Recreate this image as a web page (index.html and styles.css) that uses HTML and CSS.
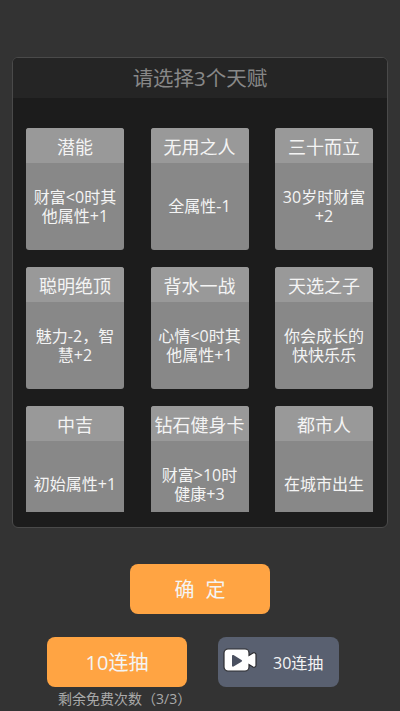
FILE: index.html
```html
<!DOCTYPE html>
<html lang="zh">
<head>
    <meta charset="UTF-8">
    <meta name="viewport" content="width=device-width, initial-scale=1.0">
    <title>天赋</title>
    <link rel="stylesheet" href="styles.css">
</head>
<body>

    <!-- Talent panel -->
    <div class="panel">
        <div class="panel-title">请选择3个天赋</div>
        <div class="talent-list">
            <div class="talent"><div class="talent-name">潜能</div><div class="talent-desc">财富&lt;0时其他属性+1</div></div>
            <div class="talent"><div class="talent-name">无用之人</div><div class="talent-desc">全属性-1</div></div>
            <div class="talent"><div class="talent-name">三十而立</div><div class="talent-desc">30岁时财富+2</div></div>
            <div class="talent"><div class="talent-name">聪明绝顶</div><div class="talent-desc">魅力-2，智慧+2</div></div>
            <div class="talent"><div class="talent-name">背水一战</div><div class="talent-desc">心情&lt;0时其他属性+1</div></div>
            <div class="talent"><div class="talent-name">天选之子</div><div class="talent-desc">你会成长的快快乐乐</div></div>
            <div class="talent"><div class="talent-name">中吉</div><div class="talent-desc">初始属性+1</div></div>
            <div class="talent"><div class="talent-name">钻石健身卡</div><div class="talent-desc">财富&gt;10时健康+3</div></div>
            <div class="talent"><div class="talent-name">都市人</div><div class="talent-desc">在城市出生</div></div>
        </div>
    </div>

    <!-- Buttons -->
    <div class="btn btn-confirm">确 定</div>

    <div class="draw-row">
        <div class="draw-free">
            <div class="btn btn-draw">10连抽</div>
            <div class="free-count">剩余免费次数（3/3）</div>
        </div>
        <div class="btn-video">
            <svg class="video-icon" viewBox="0 0 34 24" width="34" height="24">
                <path d="M5 1h17a4 4 0 0 1 4 4v2.500l4-2.500a2 2 0 0 1 3 1.500v11a2 2 0 0 1-3 1.500l-4-2.500V19a4 4 0 0 1-4 4H5a4 4 0 0 1-4-4V5a4 4 0 0 1 4-4z" fill="#fff" stroke="#2c2c30" stroke-width="1.200"/>
                <path d="M9 8a1 1 0 0 1 1.500-.9l8 4.900a1 1 0 0 1 0 1.700l-8 4.900A1 1 0 0 1 9 17.700z" fill="#4a5060"/>
            </svg>
            <span>30连抽</span>
        </div>
    </div>

</body>
</html>
```

FILE: styles.css
```css
body {
    margin: 0;
    height: 711px;
    overflow: hidden;
    background-color: #333333;
    font-family: "Open Sans", "Noto Sans CJK SC", sans-serif;
    color: #f4f4f4;
    padding-top: 57px;
    box-sizing: border-box;
}

.panel {
    width: 376px;
    height: 471px;
    margin: 0 auto;
    box-sizing: border-box;
    background-color: #1c1c1c;
    border: 1px solid #4a4a4a;
    border-radius: 6px;
    overflow: hidden;
}

.panel-title {
    height: 40px;
    line-height: 41px;
    background-color: #252525;
    color: #888;
    font-size: 20.500px;
    text-align: center;
}

.talent-list {
    height: 414px;
    padding: 30px 14px 0 13px;
    box-sizing: border-box;
    display: grid;
    grid-template-columns: repeat(3, 98px);
    grid-auto-rows: 122px;
    justify-content: space-between;
    row-gap: 17px;
    overflow: hidden;
}

.talent {
    display: flex;
    flex-direction: column;
    border-radius: 3px;
    overflow: hidden;
    background-color: #888888;
}

.talent-name {
    height: 35px;
    line-height: 39px;
    flex: none;
    background-color: #999999;
    font-size: 18px;
    text-align: center;
    white-space: nowrap;
}

.talent-desc {
    flex: 1;
    display: flex;
    align-items: center;
    justify-content: center;
    padding: 0 7px;
    font-size: 16px;
    line-height: 19px;
    text-align: center;
}

.btn {
    display: flex;
    align-items: center;
    justify-content: center;
    box-sizing: border-box;
    padding-bottom: 2px;
    background-color: #ffa443;
    border-radius: 8px;
}

.btn-confirm {
    width: 140px;
    height: 50px;
    margin: 36px auto 0;
    font-size: 20px;
    word-spacing: 6px;
}

.draw-row {
    display: flex;
    align-items: flex-start;
    margin-top: 23px;
    padding-left: 47px;
    gap: 31px;
}

.draw-free {
    width: 140px;
}

.btn-draw {
    height: 50px;
    font-size: 20px;
}

.free-count {
    margin: 3px 0 0 11px;
    color: #aaa;
    font-size: 14px;
    line-height: 18px;
    white-space: nowrap;
}

.btn-video {
    width: 121px;
    height: 50px;
    display: flex;
    align-items: center;
    box-sizing: border-box;
    padding-left: 5px;
    background-color: #596070;
    border-radius: 8px;
    font-size: 16px;
}

.video-icon {
    flex: none;
    margin-bottom: 5px;
}

.btn-video span {
    margin-left: 16px;
}
```
